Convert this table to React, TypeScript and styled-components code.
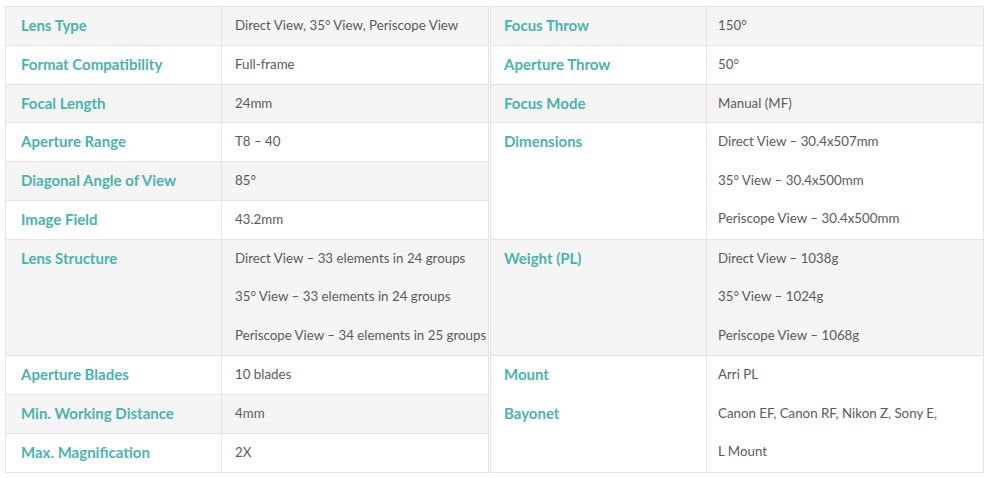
import React from "react";
import styled, { createGlobalStyle } from "styled-components";

const Global = createGlobalStyle`
  html, body { margin: 0; padding: 0; background: #fff; }
  body { font-family: Lato, "Open Sans", sans-serif; }
`;

const ROW = 37.83;

const Wrap = styled.div`
  display: flex;
  align-items: flex-start;
  gap: 1px;
  padding: 6px 0 0 5px;
`;

const Table = styled.table<{ $w: number }>`
  width: ${(p) => p.$w}px;
  border-collapse: collapse;
  table-layout: fixed;
  border: 1px solid #e4e4e4;
`;

const Tr = styled.tr`
  &:nth-child(odd) {
    background: #f5f5f5;
  }
  &:nth-child(even) {
    background: #fff;
  }
`;

const Label = styled.td<{ $pad: number }>`
  padding: 0 0 0 ${(p) => p.$pad}px;
  border: 1px solid #e4e4e4;
  color: #4ab3ad;
  font-size: 15px;
  font-weight: 700;
  vertical-align: top;
`;

const Value = styled.td<{ $pad: number }>`
  padding: 0 0 0 ${(p) => p.$pad}px;
  border: 1px solid #e4e4e4;
  color: #5a5a5a;
  font-size: 13.3px;
  vertical-align: top;
`;

const Line = styled.div<{ $h: number }>`
  height: ${(p) => p.$h}px;
  line-height: ${(p) => p.$h - 1}px;
  white-space: nowrap;
`;

type Row = { label: string[]; value: string[]; span?: number };

const leftRows: Row[] = [
  { label: ["Lens Type"], value: ["Direct View, 35° View, Periscope View"] },
  { label: ["Format Compatibility"], value: ["Full-frame"] },
  { label: ["Focal Length"], value: ["24mm"] },
  { label: ["Aperture Range"], value: ["T8 – 40"] },
  { label: ["Diagonal Angle of View"], value: ["85°"] },
  { label: ["Image Field"], value: ["43.2mm"] },
  {
    label: ["Lens Structure"],
    value: [
      "Direct View – 33 elements in 24 groups",
      "35° View – 33 elements in 24 groups",
      "Periscope View – 34 elements in 25 groups",
    ],
    span: 3,
  },
  { label: ["Aperture Blades"], value: ["10 blades"] },
  { label: ["Min. Working Distance"], value: ["4mm"] },
  { label: ["Max. Magnification"], value: ["2X"] },
];

const rightRows: Row[] = [
  { label: ["Focus Throw"], value: ["150°"] },
  { label: ["Aperture Throw"], value: ["50°"] },
  { label: ["Focus Mode"], value: ["Manual (MF)"] },
  {
    label: ["Dimensions"],
    value: [
      "Direct View – 30.4x507mm",
      "35° View – 30.4x500mm",
      "Periscope View – 30.4x500mm",
    ],
    span: 3,
  },
  {
    label: ["Weight (PL)"],
    value: ["Direct View – 1038g", "35° View – 1024g", "Periscope View – 1068g"],
    span: 3,
  },
  {
    label: ["Mount", "Bayonet"],
    value: ["Arri PL", "Canon EF, Canon RF, Nikon Z, Sony E,", "L Mount"],
    span: 3,
  },
];

function lineH(span: number) {
  return (span * ROW + (span - 1)) / span;
}

function SpecTable({
  rows,
  width,
  labelW,
  labelPad,
  valuePad,
}: {
  rows: Row[];
  width: number;
  labelW: number;
  labelPad: number;
  valuePad: number;
}) {
  return (
    <Table $w={width}>
      <colgroup>
        <col style={{ width: labelW }} />
        <col />
      </colgroup>
      <tbody>
        {rows.map((r, i) => {
          const span = r.span ?? 1;
          const h = lineH(span);
          return (
            <Tr key={i}>
              <Label $pad={labelPad}>
                {r.label.map((t, j) => (
                  <Line key={j} $h={h}>
                    {t}
                  </Line>
                ))}
              </Label>
              <Value $pad={valuePad}>
                {r.value.map((t, j) => (
                  <Line key={j} $h={h}>
                    {t}
                  </Line>
                ))}
              </Value>
            </Tr>
          );
        })}
      </tbody>
    </Table>
  );
}

export default function App() {
  return (
    <>
      <Global />
      <Wrap>
        <SpecTable rows={leftRows} width={484} labelW={216} labelPad={15} valuePad={13} />
        <SpecTable rows={rightRows} width={494} labelW={216} labelPad={13} valuePad={11} />
      </Wrap>
    </>
  );
}
